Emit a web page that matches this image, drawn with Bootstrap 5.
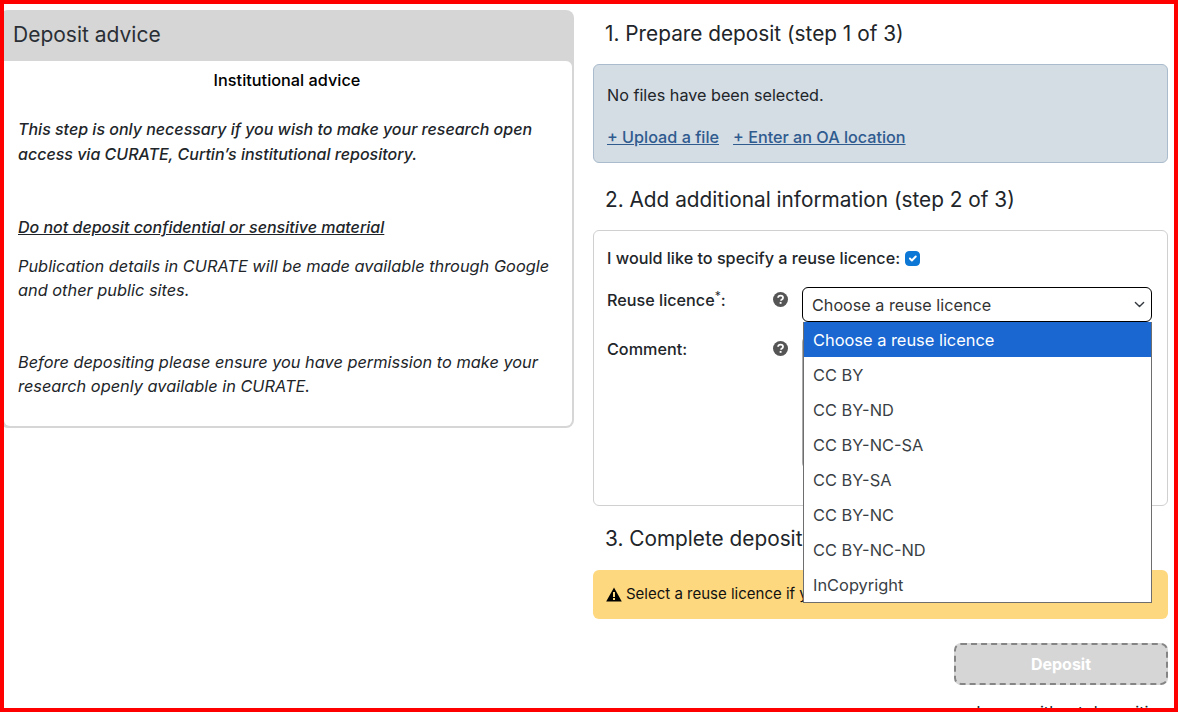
<!DOCTYPE html>
<html lang="en">
<head>
  <meta charset="UTF-8" />
  <title>Deposit</title>
  <link href="https://cdn.jsdelivr.net/npm/bootstrap@5.3.3/dist/css/bootstrap.min.css" rel="stylesheet" />
  <style>
    html, body { height: 712px; overflow: hidden; }
    body { font-family: Inter, "Liberation Sans", sans-serif; font-size: 16.2px; color: #212529; }
    .shot { height: 712px; border: 4px solid #f00; overflow: hidden; gap: 19px; }
    .advice-col { width: 570px; flex: none; padding-top: 6px; }
    .advice { margin-left: -4px; background: #d6d6d6; border: 0; border-radius: 8px; padding: 0 2px 2px 4px; }
    .advice .card-header { background: none; border: 0; height: 51px; padding: 0 9px; font-size: 21px; line-height: 49px; color: #2a2f35; }
    .advice .card-body { background: #fff; border-radius: 0 6px 6px 6px; padding: 8px 14px 27px; height: 365px; font-style: italic; font-size: 16.35px; line-height: 24.5px; }
    .advice-title { font-style: normal; font-weight: 500; color: #000; text-align: center; line-height: 22px; margin-bottom: 26px; padding-right: 2px; font-size: 16.3px; }
    .advice p { margin: 0; }
    .advice .adv-strong { font-size: 16px; font-weight: 500; }
    .advice .adv-2 { margin-top: 49px; }
    .advice .adv-3 { margin-top: 14px; }
    .advice .adv-4 { margin-top: 47px; }
    .steps-col { width: 575px; flex: none; }
    .step-title { font-size: 20.8px; font-weight: 400; line-height: 30px; margin: 0 0 15px 12px; color: #212529; }
    .title-1 { margin-top: 15px; }
    .title-2 { margin-top: 22px; }
    .title-3 { margin-top: 18px; margin-bottom: 16px; }
    .files { background: #d4dce4; border: 1px solid #a9bbcc; border-radius: 6px; height: 99px; padding: 18px 13px 0; }
    .files-text { margin-bottom: 18px; line-height: 24px; }
    .files-links { gap: 14px; line-height: 24px; }
    .files a { color: #2f5b8f; font-weight: 500; }
    .form-panel { position: relative; border: 1px solid #d0d0d0; border-radius: 6px; height: 276px; padding: 15px 13px 0; }
    .form-panel .form-label, .form-panel .line-label { font-weight: 500; margin: 0; }
    .check-row { gap: 5px; line-height: 24px; }
    .form-check-input { width: 15px; height: 15px; margin: 0; background-color: #0d77d6 !important; border-color: #0d77d6 !important; border-radius: 3px; opacity: 1 !important; }
    .field-label { width: 166px; flex: none; }
    .help { width: 15px; height: 15px; flex: none; margin-top: 4px; }
    .licence-row { margin-top: 18px; line-height: 24px; }
    .comment-row { margin-top: 15px; line-height: 24px; }
    .field-control { margin-left: 14px; }
    .licence-select { width: 350px; height: 35px; padding: 5px 9px 3px; font-size: 16.2px; border: 1px solid #000; border-radius: 6px; color: #333; box-shadow: none; background-position: right 5px center; background-size: 13px 11px; margin-top: -1px; }
    .comment-box { width: 350px; height: 133px; border: 1px solid #aaa; border-radius: 6px; margin-top: -1px; }
    .licence-menu { position: absolute; left: 209px; top: 91px; width: 349px; margin: 0; z-index: 5; border: 1px solid #6e6e6e; border-top: 0; border-radius: 0; background: #fff; }
    .licence-menu .list-group-item { border: 0; border-radius: 0; height: 35px; padding: 0 9px; line-height: 36px; font-size: 16.4px; color: #3a3f45; background: #fff; }
    .licence-menu .list-group-item.active { background: #1a67d2; color: #fff; }
    .warn { background: #fed87f; border-radius: 6px; height: 49px; padding: 0 13px; font-size: 15px; color: #111; }
    .deposit-row { margin-top: 24px; margin-bottom: 16px; }
    .btn-deposit:disabled { width: 214px; height: 42px; background: #d6d6d6; border: 2px dashed #858585; border-radius: 7px; color: #fff; font-weight: 700; font-size: 16px; opacity: 1; }
    .leave { line-height: 22px; }
  </style>
</head>
<body>
  <div class="shot d-flex">
    <div class="advice-col">
      <div class="card advice">
        <div class="card-header">Deposit advice</div>
        <div class="card-body">
          <div class="advice-title">Institutional advice</div>
          <p class="adv-strong">This step is only necessary if you wish to make your research open access via CURATE, Curtin’s institutional repository.</p>
          <p class="adv-strong text-decoration-underline adv-2">Do not deposit confidential or sensitive material</p>
          <p class="adv-3">Publication details in CURATE will be made available through Google and other public sites.</p>
          <p class="adv-4">Before depositing please ensure you have permission to make your research openly available in CURATE.</p>
        </div>
      </div>
    </div>
    <div class="steps-col">
      <h4 class="step-title title-1">1. Prepare deposit (step 1 of 3)</h4>
      <div class="files">
        <div class="files-text">No files have been selected.</div>
        <div class="d-flex files-links">
          <a href="#">+ Upload a file</a>
          <a href="#">+ Enter an OA location</a>
        </div>
      </div>
      <h4 class="step-title title-2">2. Add additional information (step 2 of 3)</h4>
      <div class="form-panel">
        <div class="d-flex align-items-center check-row">
          <span class="line-label">I would like to specify a reuse licence:</span>
          <input class="form-check-input" type="checkbox" checked disabled />
        </div>
        <div class="d-flex licence-row">
          <label class="form-label field-label">Reuse licence<sup class="fw-normal">*</sup>:</label>
          <svg class="help" viewBox="0 0 16 16"><circle cx="8" cy="8" r="8" fill="#555"/><path d="M5.400 6.200C5.500 4.600 6.600 3.800 8.100 3.800c1.500 0 2.600.9 2.600 2.200 0 1-.6 1.500-1.300 2-.6.4-.8.7-.8 1.300" fill="none" stroke="#fff" stroke-width="1.900"/><rect x="7.100" y="10.600" width="2" height="2" fill="#fff"/></svg>
          <select class="form-select licence-select field-control"><option>Choose a reuse licence</option></select>
        </div>
        <div class="d-flex comment-row">
          <label class="form-label field-label">Comment:</label>
          <svg class="help" viewBox="0 0 16 16"><circle cx="8" cy="8" r="8" fill="#555"/><path d="M5.400 6.200C5.500 4.600 6.600 3.800 8.100 3.800c1.500 0 2.600.9 2.600 2.200 0 1-.6 1.500-1.300 2-.6.4-.8.7-.8 1.300" fill="none" stroke="#fff" stroke-width="1.900"/><rect x="7.100" y="10.600" width="2" height="2" fill="#fff"/></svg>
          <textarea class="comment-box field-control"></textarea>
        </div>
        <ul class="list-group licence-menu">
          <li class="list-group-item active">Choose a reuse licence</li>
          <li class="list-group-item">CC BY</li>
          <li class="list-group-item">CC BY-ND</li>
          <li class="list-group-item">CC BY-NC-SA</li>
          <li class="list-group-item">CC BY-SA</li>
          <li class="list-group-item">CC BY-NC</li>
          <li class="list-group-item">CC BY-NC-ND</li>
          <li class="list-group-item">InCopyright</li>
        </ul>
      </div>
      <h4 class="step-title title-3">3. Complete deposit (step 3 of 3)</h4>
      <div class="warn d-flex align-items-center gap-1">
        <svg width="16" height="15" viewBox="0 0 16 15"><path d="M8 .5 15.800 14.500H.2z" fill="#000"/><rect x="7" y="5" width="2" height="5" fill="#fed87f"/><rect x="7" y="11" width="2" height="2" fill="#fed87f"/></svg>
        <span>Select a reuse licence if you wish to continue with this deposit.</span>
      </div>
      <div class="d-flex justify-content-end deposit-row">
        <button class="btn btn-deposit" disabled>Deposit</button>
      </div>
      <div class="text-end leave">Leave without depositing</div>
    </div>
  </div>
  <script src="https://cdn.jsdelivr.net/npm/bootstrap@5.3.3/dist/js/bootstrap.bundle.min.js"></script>
</body>
</html>
